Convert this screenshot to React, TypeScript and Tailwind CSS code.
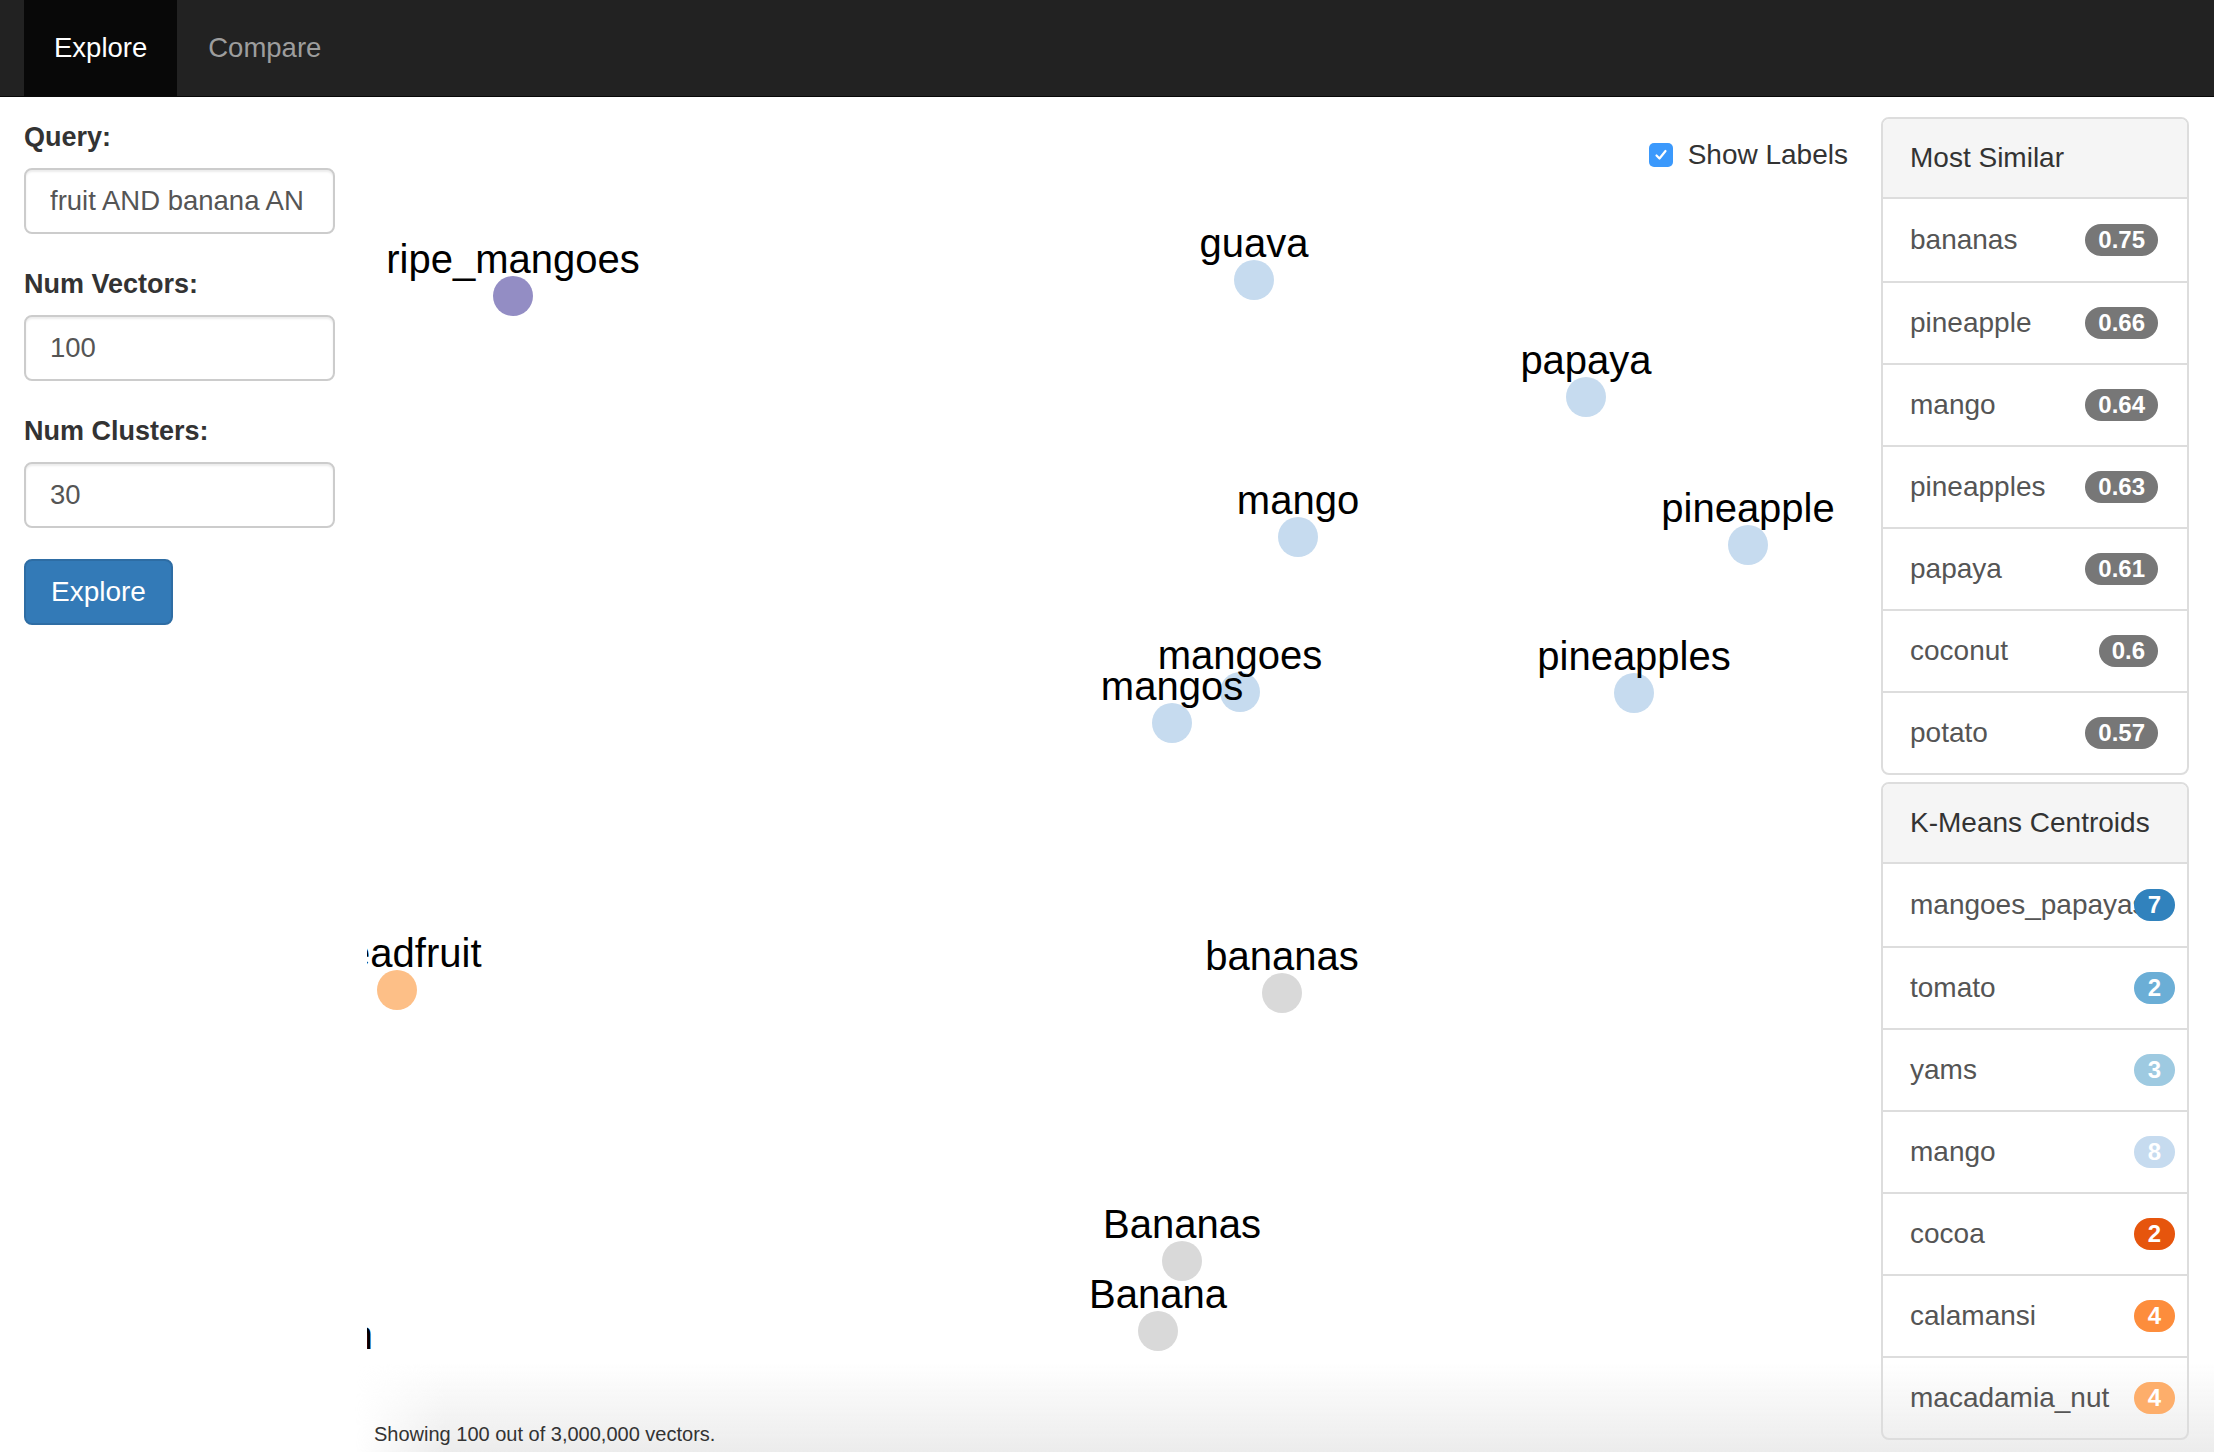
import React from "react";

type Pt = { label: string; x: number; y: number; color: string };

// coordinates relative to chart column (origin at page x=367, y=97)
const points: Pt[] = [
  { label: "ripe_mangoes", x: 146, y: 199, color: "#938dc4" },
  { label: "guava", x: 887, y: 183, color: "#c6dbef" },
  { label: "papaya", x: 1219, y: 300, color: "#c6dbef" },
  { label: "mango", x: 931, y: 440, color: "#c6dbef" },
  { label: "pineapple", x: 1381, y: 448, color: "#c6dbef" },
  { label: "mangoes", x: 873, y: 595, color: "#c6dbef" },
  { label: "mangos", x: 805, y: 626, color: "#c6dbef" },
  { label: "pineapples", x: 1267, y: 596, color: "#c6dbef" },
  { label: "breadfruit", x: 30, y: 893, color: "#fdbf87" },
  { label: "bananas", x: 915, y: 896, color: "#d9d9d9" },
  { label: "Bananas", x: 815, y: 1164, color: "#d9d9d9" },
  { label: "Banana", x: 791, y: 1234, color: "#d9d9d9" },
  { label: "plantain", x: -64, y: 1275, color: "#d9d9d9" },
];

const similar = [
  { w: "bananas", v: "0.75" },
  { w: "pineapple", v: "0.66" },
  { w: "mango", v: "0.64" },
  { w: "pineapples", v: "0.63" },
  { w: "papaya", v: "0.61" },
  { w: "coconut", v: "0.6" },
  { w: "potato", v: "0.57" },
];

const centroids = [
  { w: "mangoes_papayas", v: "7", c: "bg-[#3182bd]" },
  { w: "tomato", v: "2", c: "bg-[#6baed6]" },
  { w: "yams", v: "3", c: "bg-[#9ecae1]" },
  { w: "mango", v: "8", c: "bg-[#c6dbef]" },
  { w: "cocoa", v: "2", c: "bg-[#e6550d]" },
  { w: "calamansi", v: "4", c: "bg-[#fd8d3c]" },
  { w: "macadamia_nut", v: "4", c: "bg-[#fdae6b]" },
];

function Field({ label, value }: { label: string; value: string }) {
  return (
    <div className="mb-[31px]">
      <div className="text-[27px] font-bold leading-[38px] text-[#333] mb-[12px]">{label}</div>
      <input
        readOnly
        value={value}
        className="block w-full h-[66px] border-2 border-[#ccc] rounded-[8px] px-[24px] text-[27.5px] text-[#555] bg-white shadow-[inset_0_2px_2px_rgba(0,0,0,0.075)] outline-none"
      />
    </div>
  );
}

export default function App() {
  return (
    <div
      className="relative w-[2214px] h-[1452px] overflow-hidden bg-white"
      style={{ fontFamily: '"Liberation Sans", Arial, sans-serif' }}
    >
      {/* bottom fade (behind content) */}
      <div className="pointer-events-none absolute left-[355px] right-0 bottom-0 h-[90px] bg-gradient-to-b from-white/0 to-[#ececec] [mask-image:linear-gradient(to_right,transparent,black_90px)]" />

      <div className="relative z-10 w-full h-full flex flex-col">
        {/* navbar */}
        <div className="h-[97px] shrink-0 bg-[#222] border-b border-[#080808] flex pl-[24px]">
          <div className="h-full bg-[#080808] px-[30px] flex items-center text-white text-[27.5px]">Explore</div>
          <div className="h-full px-[31px] flex items-center text-[#9d9d9d] text-[27.5px]">Compare</div>
        </div>

        <div className="flex flex-1 min-h-0">
          {/* sidebar */}
          <div className="w-[311px] ml-[24px] pt-[21px] shrink-0">
            <Field label="Query:" value="fruit AND banana AN" />
            <Field label="Num Vectors:" value="100" />
            <Field label="Num Clusters:" value="30" />
            <button className="h-[66px] px-[25px] rounded-[8px] bg-[#337ab7] border-2 border-[#2e6da4] text-white text-[28px]">
              Explore
            </button>
          </div>

          {/* chart */}
          <div className="relative flex-1 ml-[32px] overflow-hidden">
            <svg className="absolute inset-0 w-full h-full" xmlns="http://www.w3.org/2000/svg">
              {points.map((p) => (
                <circle key={"c" + p.label} cx={p.x} cy={p.y} r={20} fill={p.color} />
              ))}
              {points.map((p) => (
                <text
                  key={"t" + p.label}
                  x={p.x}
                  y={p.y - 23}
                  textAnchor="middle"
                  fontSize={40}
                  fill="#000"
                  fontFamily='"Liberation Sans", Arial, sans-serif'
                >
                  {p.label}
                </text>
              ))}
            </svg>
            <div className="absolute top-[41px] right-[33px] h-[34px] flex items-center gap-[15px]">
              <div className="w-[24px] h-[24px] rounded-[5px] bg-[#3b99fc] flex items-center justify-center">
                <svg width="16" height="16" viewBox="0 0 16 16">
                  <path d="M3.5 8.5 L6.5 11.5 L12.5 4" fill="none" stroke="#fff" strokeWidth="2.2" strokeLinecap="round" strokeLinejoin="round" />
                </svg>
              </div>
              <span className="text-[28px] text-[#333]">Show Labels</span>
            </div>
            <div className="absolute left-[7px] bottom-[6px] text-[20px] leading-[24px] text-[#333]">
              Showing 100 out of 3,000,000 vectors.
            </div>
          </div>

          {/* right panels */}
          <div className="w-[308px] mr-[25px] pt-[20px] shrink-0 flex flex-col gap-[7px]">
            <div className="border-2 border-[#ddd] rounded-[8px] overflow-hidden">
              <div className="h-[80px] bg-[#f5f5f5] border-b-2 border-[#ddd] flex items-center pl-[27px] text-[28px] text-[#333]">
                Most Similar
              </div>
              {similar.map((s, i) => (
                <div
                  key={s.w}
                  className={
                    "h-[82px] flex items-center justify-between pl-[27px] pr-[29px] text-[28px] text-[#555] " +
                    (i > 0 ? "border-t-2 border-[#ddd]" : "")
                  }
                >
                  <span>{s.w}</span>
                  <span className="h-[32px] px-[13px] rounded-full bg-[#777] text-white text-[24px] font-bold flex items-center">
                    {s.v}
                  </span>
                </div>
              ))}
            </div>

            <div className="border-2 border-[#ddd] rounded-[8px] overflow-hidden">
              <div className="h-[80px] bg-[#f5f5f5] border-b-2 border-[#ddd] flex items-center pl-[27px] text-[28px] text-[#333]">
                K-Means Centroids
              </div>
              {centroids.map((s, i) => (
                <div
                  key={s.w + i}
                  className={
                    "relative h-[82px] flex items-center pl-[27px] text-[28px] text-[#555] whitespace-nowrap overflow-hidden " +
                    (i > 0 ? "border-t-2 border-[#ddd]" : "")
                  }
                >
                  <span>{s.w}</span>
                  <span
                    className={
                      "absolute right-[12px] top-1/2 -translate-y-1/2 h-[32px] px-[14px] rounded-full text-white text-[24px] font-bold flex items-center " +
                      s.c
                    }
                  >
                    {s.v}
                  </span>
                </div>
              ))}
            </div>
          </div>
        </div>
      </div>
    </div>
  );
}
